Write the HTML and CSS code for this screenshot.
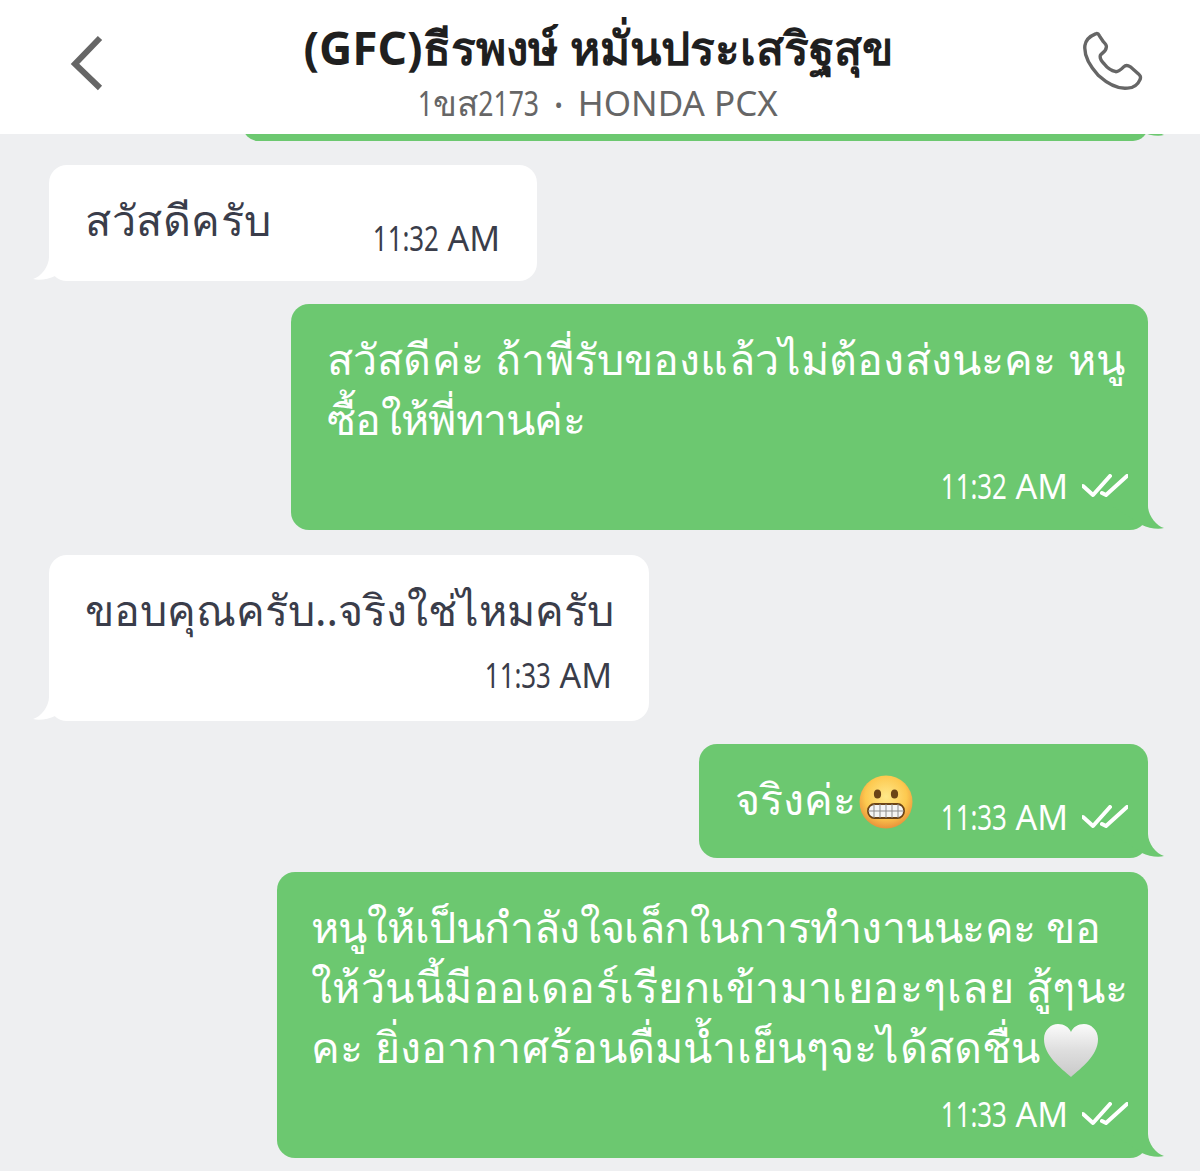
FILE: index.html
```html
<!DOCTYPE html>
<html lang="th">

<head>
  <meta charset="UTF-8">
  <title>Chat</title>
  <link rel="stylesheet" href="styles.css">
</head>

<body>
  <div class="chat-header">
    <svg class="back-icon" viewBox="0 0 34 56"><path d="M30 3 L5 29 L30 53"/></svg>
    <div class="header-text">
      <h1>(GFC)ธีรพงษ์ หมั่นประเสริฐสุข</h1>
      <div class="plate"><span class="num one">1</span>ขส<span class="num four">2173</span> <span class="dot">•</span> HONDA PCX</div>
    </div>
    <svg class="phone-icon" viewBox="0 0 64 64"><path d="M14 3 C9 5 4 9 3 15 C2 24 7 35 17 46 C27 55 38 60 47 59 C53 59 58 55 60 50 C61 47 60 46 58 44 L50 37 C47 35 45 35 43 37 C40 40 38 42 35 42 C31 41 26 38 23 34 C20 31 18 28 19 25 C20 23 25 21 25 17 C26 15 24 13 22 11 L18 5 C17 3 16 2 14 3 Z"/></svg>
  </div>

  <div class="chat-list">
    <div class="bubble out sliver">
      <svg class="tail" viewBox="0 0 52 24"><path d="M0 0 H36 C36 9 44 20 52 22 C46 24 36 22 30 19 L0 0 Z"/></svg>
    </div>

    <div class="bubble in first">
      <div class="msg-inline">
        <div class="msg-text wide">สวัสดีครับ</div>
        <div class="time"><span class="num">11:32</span> AM</div>
      </div>
      <svg class="tail" viewBox="0 0 52 24"><path d="M0 0 H36 C36 9 44 20 52 22 C46 24 36 22 30 19 L0 0 Z"/></svg>
    </div>

    <div class="bubble out second">
      <div class="msg-text">
        <div class="open">สวัสดีค่ะ ถ้าพี่รับของแล้วไม่ต้องส่งนะคะ หนู</div>
        <div class="snug">ซื้อให้พี่ทานค่ะ</div>
      </div>
      <div class="meta">
        <span class="time"><span class="num">11:32</span> AM</span>
        <svg class="read-icon" viewBox="0 0 46 24"><path d="M1 12 L11 21 L28 2 M20 19 L24 21 L45 2"/></svg>
      </div>
      <svg class="tail" viewBox="0 0 52 24"><path d="M0 0 H36 C36 9 44 20 52 22 C46 24 36 22 30 19 L0 0 Z"/></svg>
    </div>

    <div class="bubble in third">
      <div class="msg-text">ขอบคุณครับ..จริงใช่ไหมครับ</div>
      <div class="meta">
        <span class="time"><span class="num">11:33</span> AM</span>
      </div>
      <svg class="tail" viewBox="0 0 52 24"><path d="M0 0 H36 C36 9 44 20 52 22 C46 24 36 22 30 19 L0 0 Z"/></svg>
    </div>

    <div class="bubble out fourth">
      <div class="msg-inline">
        <div class="msg-text">จริงค่ะ<svg class="emoji" viewBox="0 0 54 54">
            <defs>
              <radialGradient id="face" cx="50%" cy="40%" r="60%">
                <stop offset="0" stop-color="#ffe88a"/>
                <stop offset="0.65" stop-color="#fdc94f"/>
                <stop offset="1" stop-color="#e8923a"/>
              </radialGradient>
            </defs>
            <circle cx="27" cy="27" r="26.5" fill="url(#face)"/>
            <ellipse cx="18.500" cy="19" rx="3.600" ry="4.500" fill="#6b4316"/>
            <ellipse cx="35.500" cy="19" rx="3.600" ry="4.500" fill="#6b4316"/>
            <rect x="9" y="29" width="36" height="14" rx="6.500" fill="#f4f4f4" stroke="#6b4316" stroke-width="1.800"/>
            <path d="M9 36 H45 M15 29 V43 M21 29 V43 M27 29 V43 M33 29 V43 M39 29 V43" stroke="#8d8d8d" stroke-width="1" fill="none"/>
          </svg></div>
        <div class="meta">
          <span class="time"><span class="num">11:33</span> AM</span>
          <svg class="read-icon" viewBox="0 0 46 24"><path d="M1 12 L11 21 L28 2 M20 19 L24 21 L45 2"/></svg>
        </div>
      </div>
      <svg class="tail" viewBox="0 0 52 24"><path d="M0 0 H36 C36 9 44 20 52 22 C46 24 36 22 30 19 L0 0 Z"/></svg>
    </div>

    <div class="bubble out fifth">
      <div class="msg-text">
        <div class="tight">หนูให้เป็นกำลังใจเล็กในการทำงานนะคะ ขอ</div>
        <div class="loose">ให้วันนี้มีออเดอร์เรียกเข้ามาเยอะๆเลย สู้ๆนะ</div>
        <div class="open">คะ ยิ่งอากาศร้อนดื่มน้ำเย็นๆจะได้สดชื่น<svg class="emoji heart" viewBox="0 0 56 54">
            <defs>
              <linearGradient id="heart" x1="0" y1="0" x2="0" y2="1">
                <stop offset="0" stop-color="#fbfbfb"/>
                <stop offset="0.5" stop-color="#dedede"/>
                <stop offset="1" stop-color="#c9c9c9"/>
              </linearGradient>
            </defs>
            <path d="M28 54 C18 45 1 33 1 16 C1 7 8 1 15 1 C21 1 26 4 28 9 C30 4 35 1 41 1 C48 1 55 7 55 16 C55 33 38 45 28 54 Z" fill="url(#heart)"/>
          </svg></div>
      </div>
      <div class="meta">
        <span class="time"><span class="num">11:33</span> AM</span>
        <svg class="read-icon" viewBox="0 0 46 24"><path d="M1 12 L11 21 L28 2 M20 19 L24 21 L45 2"/></svg>
      </div>
      <svg class="tail" viewBox="0 0 52 24"><path d="M0 0 H36 C36 9 44 20 52 22 C46 24 36 22 30 19 L0 0 Z"/></svg>
    </div>
  </div>
</body>

</html>
```

FILE: styles.css
```css
html,
body {
  margin: 0;
  height: 1171px;
  overflow: hidden;
}

body {
  font-family: "Noto Sans", "Open Sans", sans-serif;
  background: #eeeff1;
  color: #3a3d4a;
}

.chat-header {
  position: relative;
  z-index: 2;
  height: 134px;
  background: #fff;
  display: flex;
  align-items: center;
  justify-content: center;
}

.back-icon {
  position: absolute;
  left: 70px;
  top: 35px;
  width: 34px;
  height: 56px;
  fill: none;
  stroke: #666;
  stroke-width: 6;
}

.phone-icon {
  position: absolute;
  left: 1082px;
  top: 31px;
  width: 62px;
  height: 62px;
  fill: none;
  stroke: #666;
  stroke-width: 3.5;
}

.header-text {
  text-align: center;
  margin-right: 4px;
  padding-top: 11px;
}

.header-text h1 {
  margin: 0;
  font-size: 46px;
  line-height: 56px;
  font-weight: 700;
  color: #1f1f1f;
}

.plate {
  margin-top: 5px;
  font-size: 35px;
  line-height: 46px;
  color: #666;
}

.plate .dot {
  font-size: 22px;
  margin: 0 6px;
  vertical-align: 3px;
}

/* digits in the screenshot are much narrower than any installed font */
.num {
  display: inline-block;
  transform: scaleX(0.76);
  transform-origin: right;
}

.time .num {
  margin-left: -21px;
}

.plate .one {
  margin-left: -5px;
}

.plate .four {
  margin-left: -19px;
}

.chat-list {
  display: flex;
  flex-direction: column;
  align-items: flex-start;
  padding: 0 52px 0 49px;
}

.bubble {
  position: relative;
  box-sizing: border-box;
  border-radius: 18px;
  font-size: 43px;
  line-height: 60px;
}

.bubble.out {
  align-self: flex-end;
  background: #6cc870;
  color: #fff;
  padding: 25px 20px 0 36px;
}

.bubble.in {
  background: #fff;
  padding: 25px 37px 0 36px;
}

.tail {
  position: absolute;
  right: -16px;
  bottom: 0;
  width: 52px;
  height: 24px;
}

.bubble.out .tail {
  fill: #6cc870;
}

.bubble.in .tail {
  left: -16px;
  right: auto;
  fill: #fff;
  transform: scaleX(-1);
}

.sliver {
  width: 905px;
  height: 30px;
  margin-top: -23px;
  padding: 0;
}

.sliver .tail {
  bottom: 4px;
}

.first {
  width: 488px;
  height: 116px;
  margin-top: 24px;
}

.second {
  width: 857px;
  height: 226px;
  margin-top: 23px;
}

.third {
  width: 600px;
  height: 166px;
  margin-top: 25px;
}

.fourth {
  width: 449px;
  height: 114px;
  margin-top: 23px;
}

.bubble.fifth {
  width: 871px;
  height: 286px;
  margin-top: 14px;
  padding-left: 34px;
}

.msg-inline {
  display: flex;
  justify-content: space-between;
  align-items: flex-start;
}

.msg-inline > .time,
.msg-inline > .meta {
  margin-top: 25px;
}

.msg-text {
  white-space: nowrap;
}

.snug {
  letter-spacing: -0.7px;
}

.tight {
  letter-spacing: -0.55px;
}

.open {
  letter-spacing: 0.15px;
}

.loose {
  letter-spacing: 0.45px;
}

.wide {
  letter-spacing: 0.5px;
}

.time {
  font-size: 34px;
  line-height: 46px;
}

.meta {
  display: flex;
  justify-content: flex-end;
  align-items: center;
  gap: 14px;
  margin-top: 14px;
}

.third .meta {
  margin-top: 12px;
}

.read-icon {
  width: 46px;
  height: 24px;
  fill: none;
  stroke: #fff;
  stroke-width: 4;
  stroke-linecap: round;
  stroke-linejoin: round;
}

.emoji {
  width: 54px;
  height: 54px;
  margin-left: 3px;
  margin-bottom: -10px;
  vertical-align: -4px;
}

.heart {
  width: 56px;
}
```
